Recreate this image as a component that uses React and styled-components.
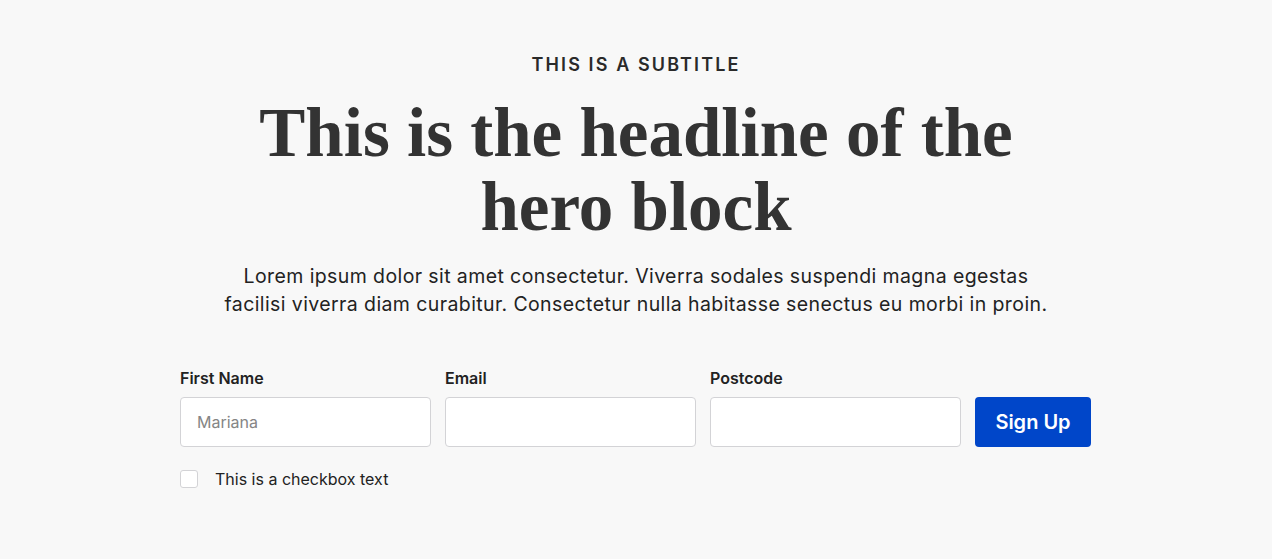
import React from "react";
import styled, { createGlobalStyle } from "styled-components";

const GlobalStyle = createGlobalStyle`
  body {
    margin: 0;
    background: #f8f8f8;
    font-family: Inter, "Liberation Sans", sans-serif;
    color: #222;
  }
`;

const Hero = styled.section`
  display: flex;
  flex-direction: column;
  align-items: center;
  padding-top: 54px;
`;

const Subtitle = styled.div`
  font-size: 18px;
  line-height: 22px;
  font-weight: 600;
  letter-spacing: 2.1px;
  color: #2a2a2a;
  text-transform: uppercase;
`;

const Headline = styled.h1`
  margin: 20px 0 0;
  width: 840px;
  text-align: center;
  font-family: "Liberation Serif", "DejaVu Serif", serif;
  font-weight: 700;
  font-size: 69px;
  line-height: 74px;
  color: #333;
`;

const Lead = styled.p`
  margin: 18px 0 0;
  width: 860px;
  text-align: center;
  font-size: 19.5px;
  letter-spacing: 0.4px;
  line-height: 28px;
  color: #222;
`;

const Form = styled.form`
  width: 912px;
  margin-top: 51px;
`;

const Row = styled.div`
  display: flex;
  align-items: flex-end;
  gap: 14px;
`;

const Field = styled.label`
  display: flex;
  flex-direction: column;
  gap: 10px;
  width: 251px;
`;

const Label = styled.span`
  font-size: 16px;
  line-height: 18px;
  font-weight: 600;
  color: #222;
`;

const Input = styled.input`
  box-sizing: border-box;
  height: 50px;
  width: 100%;
  padding: 0 16px;
  border: 1px solid #d3d3d6;
  border-radius: 4px;
  background: #fff;
  font-family: inherit;
  font-size: 16px;
  color: #222;
  outline: none;

  &::placeholder {
    color: #858585;
  }
`;

const Button = styled.button`
  height: 50px;
  width: 116px;
  border: none;
  border-radius: 4px;
  background: #0046c9;
  color: #fff;
  font-family: inherit;
  font-size: 20px;
  font-weight: 600;
  cursor: pointer;
`;

const CheckRow = styled.label`
  display: flex;
  align-items: center;
  gap: 17px;
  margin-top: 22px;
  font-size: 16px;
  color: #222;
`;

const Box = styled.span`
  box-sizing: border-box;
  width: 18px;
  height: 18px;
  border: 1px solid #d3d3d6;
  border-radius: 3px;
  background: #fff;
`;

export default function App() {
  return (
    <>
      <GlobalStyle />
      <Hero>
        <Subtitle>This is a subtitle</Subtitle>
        <Headline>This is the headline of the hero block</Headline>
        <Lead>
          Lorem ipsum dolor sit amet consectetur. Viverra sodales suspendi magna egestas
          <br />
          facilisi viverra diam curabitur. Consectetur nulla habitasse senectus eu morbi in proin.
        </Lead>
        <Form onSubmit={(e) => e.preventDefault()}>
          <Row>
            <Field>
              <Label>First Name</Label>
              <Input placeholder="Mariana" />
            </Field>
            <Field>
              <Label>Email</Label>
              <Input />
            </Field>
            <Field>
              <Label>Postcode</Label>
              <Input />
            </Field>
            <Button type="submit">Sign Up</Button>
          </Row>
          <CheckRow>
            <Box />
            This is a checkbox text
          </CheckRow>
        </Form>
      </Hero>
    </>
  );
}
